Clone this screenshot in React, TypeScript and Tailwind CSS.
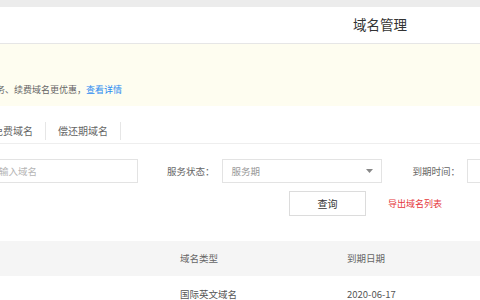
const font = { fontFamily: '"Noto Sans CJK SC", "Noto Sans", sans-serif' };

export default function App() {
  return (
    <div className="w-[480px] h-[300px] overflow-hidden bg-white text-[#666]" style={font}>
      <div className="h-[7px] bg-[#ececec]" />

      <div className="h-[37px] flex items-center pl-[353px] border-b border-[#e6e6e6]">
        <span className="text-[13.5px] text-[#333] leading-none">域名管理</span>
      </div>

      <div className="h-[62px] bg-[#fefdf0] flex items-end pb-[12px]">
        <p className="-ml-[4px] text-[9px] leading-none whitespace-nowrap">
          务、续费域名更优惠，<span className="text-[#2d8cf0]">查看详情</span>
        </p>
      </div>

      <div className="h-[38px] flex items-center border-b border-[#eeeeee] pt-[14px] pb-[2px]">
        <div className="-ml-[7px] flex items-center text-[10px] leading-none whitespace-nowrap">
          <span>免费域名</span>
          <span className="mx-[12px] w-px h-[18px] bg-[#e6e6e6]" />
          <span>偿还期域名</span>
          <span className="ml-[12px] w-px h-[18px] bg-[#e6e6e6]" />
        </div>
      </div>

      <div className="mt-[15px] flex items-center text-[9.5px] whitespace-nowrap">
        <div className="shrink-0 -ml-[10px] w-[148px] h-[24px] border border-[#e3e3e3] flex items-center pl-[8px] text-[#b5b5b5]">
          输入域名
        </div>
        <span className="shrink-0 ml-[29px]">服务状态：</span>
        <div className="shrink-0 ml-[7px] w-[160px] h-[24px] border border-[#e3e3e3] flex items-center justify-between pl-[9px] pr-[8px] text-[#999]">
          <span>服务期</span>
          <svg width="7" height="4" viewBox="0 0 7 4">
            <path d="M0 0h7L3.5 4z" fill="#888" />
          </svg>
        </div>
        <span className="shrink-0 ml-[31px]">到期时间：</span>
        <div className="shrink-0 ml-[7px] w-[60px] h-[24px] border border-[#e3e3e3]" />
      </div>

      <div className="mt-[8px] flex items-center text-[9px] whitespace-nowrap">
        <div className="shrink-0 ml-[289px] w-[77px] h-[25px] border border-[#dcdcdc] flex items-center justify-center text-[10px] text-[#333]">
          查询
        </div>
        <span className="shrink-0 ml-[22px] text-[#e5383b]">导出域名列表</span>
      </div>

      <div className="mt-[25px] h-[35px] bg-[#f5f5f5] flex items-center text-[9.5px] whitespace-nowrap">
        <span className="shrink-0 ml-[180px] w-[167px]">域名类型</span>
        <span>到期日期</span>
      </div>

      <div className="h-[36px] flex items-center text-[9.5px] whitespace-nowrap text-[#555]">
        <span className="shrink-0 ml-[180px] w-[167px]">国际英文域名</span>
        <span>2020-06-17</span>
      </div>
    </div>
  );
}
